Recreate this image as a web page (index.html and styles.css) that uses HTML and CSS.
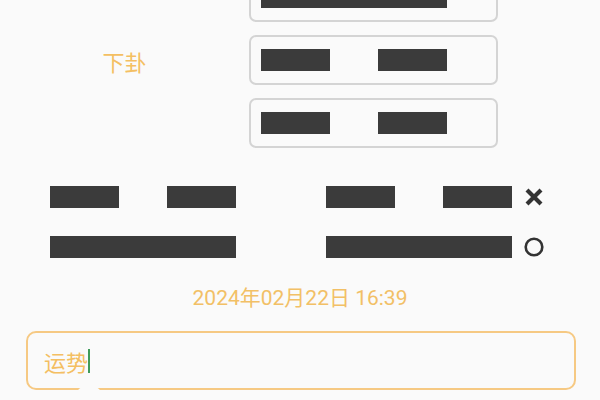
FILE: index.html
```html
<!DOCTYPE html>
<html lang="zh">
<head>
<meta charset="utf-8">
<link rel="stylesheet" href="styles.css">
</head>
<body>
<div class="page">
  <section class="gua">
    <div class="gua-row">
      <div class="label"></div>
      <div class="box"><div class="yao yang"></div></div>
    </div>
    <div class="gua-row">
      <div class="label">下卦</div>
      <div class="box"><div class="yao yin"><span></span><span></span></div></div>
    </div>
    <div class="gua-row">
      <div class="label"></div>
      <div class="box"><div class="yao yin"><span></span><span></span></div></div>
    </div>
  </section>

  <section class="lines">
    <div class="line-row">
      <div class="yao yin"><span></span><span></span></div>
      <div class="yao yin"><span></span><span></span></div>
      <svg class="mark" viewBox="0 0 22 20" width="22" height="20"><path d="M4 3 L18 17 M18 3 L4 17" stroke="#333" stroke-width="4.2" stroke-linecap="butt" fill="none"/></svg>
    </div>
    <div class="line-row">
      <div class="yao yang"></div>
      <div class="yao yang"></div>
      <svg class="mark" viewBox="0 0 22 20" width="22" height="20"><circle cx="11" cy="10" r="8.3" stroke="#333" stroke-width="2.6" fill="none"/></svg>
    </div>
  </section>

  <div class="date">2024年02月22日 16:39</div>

  <div class="input"><div class="input-line"><span class="input-text">运势</span><i class="caret"></i></div></div>
  <div class="handle"></div>
</div>
</body>
</html>
```

FILE: styles.css
```css
html, body {
  margin: 0;
  padding: 0;
  background: #fafafa;
  overflow: hidden;
}
body {
  width: 600px;
  height: 400px;
  font-family: Roboto, "Noto Sans CJK SC", sans-serif;
}
.page {
  position: relative;
  display: flow-root;
  width: 600px;
  height: 400px;
}
.gua {
  margin-top: -28px;
  display: flex;
  flex-direction: column;
  gap: 13px;
}
.gua-row {
  display: grid;
  grid-template-columns: 249px 249px;
  height: 50px;
}
.label {
  display: flex;
  align-items: center;
  justify-content: center;
  color: #f4bf62;
  font-size: 22px;
  font-family: "Noto Sans CJK SC", sans-serif;
  padding-top: 2px;
}
.box {
  box-sizing: border-box;
  border: 2px solid #d4d4d4;
  border-radius: 7px;
  display: flex;
  align-items: center;
  padding-left: 10px;
}
.yao {
  width: 186px;
  height: 22px;
  display: flex;
  justify-content: space-between;
}
.yao.yang {
  background: #3b3b3b;
}
.yao.yin span {
  width: 69px;
  height: 22px;
  background: #3b3b3b;
}
.lines {
  margin-top: 38px;
  display: flex;
  flex-direction: column;
  gap: 28px;
}
.line-row {
  display: flex;
  align-items: center;
  padding-left: 50px;
}
.line-row .yao + .yao {
  margin-left: 90px;
}
.mark {
  margin-left: 11px;
  display: block;
}
.date {
  margin-top: 28px;
  height: 24px;
  line-height: 24px;
  text-align: center;
  color: #f2c066;
  font-size: 21px;
  font-family: Roboto, "Noto Sans CJK SC", sans-serif;
}
.input {
  box-sizing: border-box;
  margin: 21px 24px 0 26px;
  height: 59px;
  border: 2px solid #f6c983;
  border-radius: 10px;
  padding: 15px 0 0 16px;
}
.input-line {
  height: 26px;
  line-height: 26px;
  white-space: nowrap;
}
.input-text {
  color: #f4bf62;
  font-size: 22px;
  font-family: "Noto Sans CJK SC", sans-serif;
  vertical-align: top;
}
.caret {
  display: inline-block;
  vertical-align: top;
  width: 2px;
  height: 24px;
  margin-top: 1px;
  background: #3f9b5a;
}
.handle {
  position: absolute;
  left: 76px;
  top: 386px;
  width: 26px;
  height: 20px;
  border-radius: 10px;
  background: #fafafa;
}
```
